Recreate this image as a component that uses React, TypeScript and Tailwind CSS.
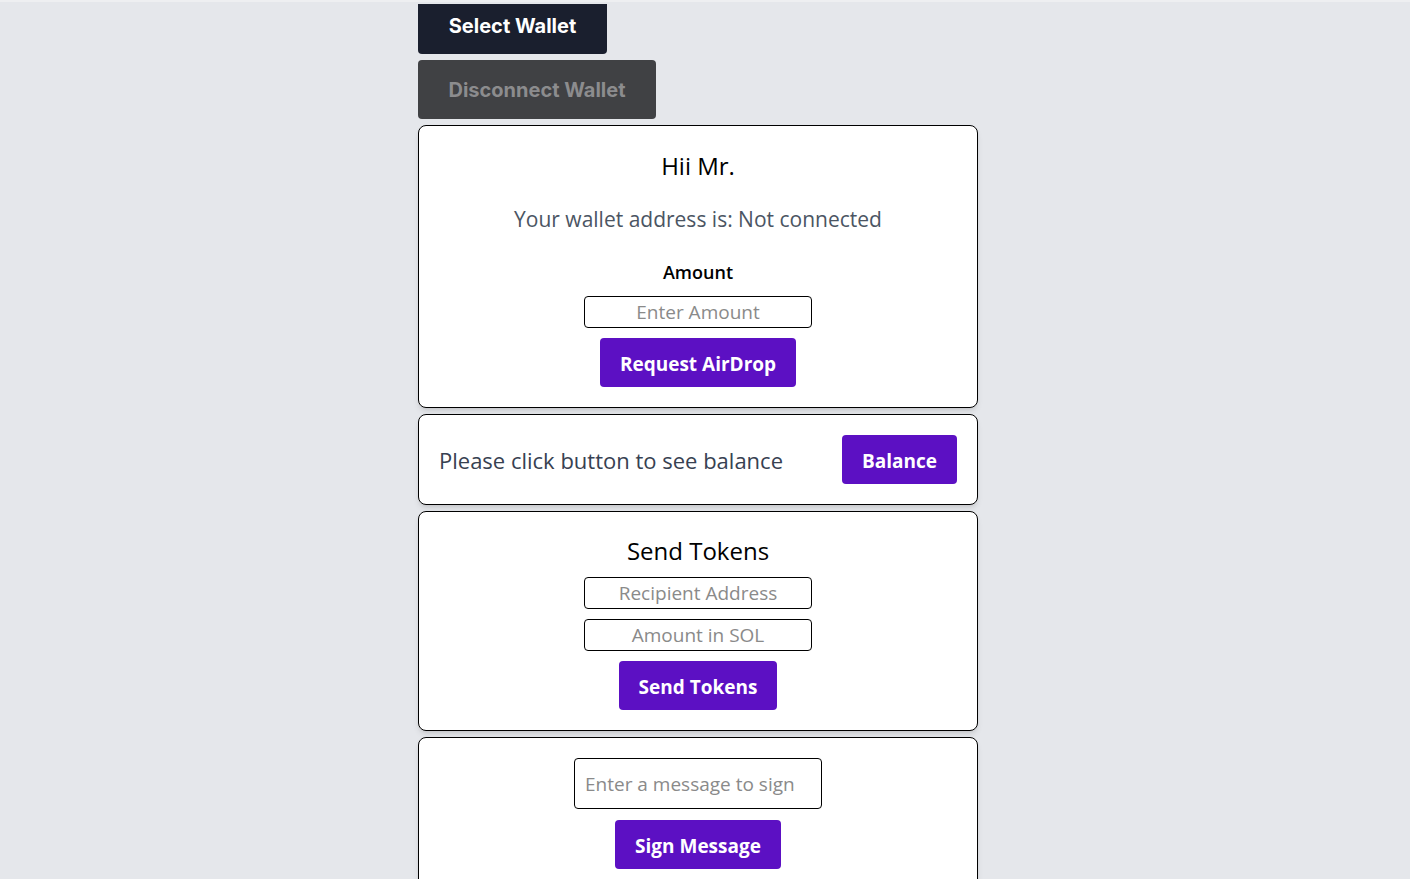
import React from 'react';

const body = { fontFamily: '"Open Sans", "Noto Sans", sans-serif' };
const wallet = { fontFamily: 'Inter, "Liberation Sans", sans-serif' };

const PurpleButton: React.FC<{ label: string; className?: string }> = ({ label, className = '' }) => (
  <button
    className={`h-[49px] px-5 pt-[3px] rounded-[4px] bg-[#5c10c3] text-white text-[19px] font-bold ${className}`}
  >
    {label}
  </button>
);

const Field: React.FC<{ placeholder: string; className?: string }> = ({ placeholder, className = '' }) => (
  <input
    placeholder={placeholder}
    className={`w-[228px] h-[32px] border border-black rounded-[4px] text-center text-[19px] placeholder:text-[#8a8a8a] outline-none ${className}`}
  />
);

const App: React.FC = () => {
  return (
    <div className="h-[879px] overflow-hidden bg-[#e5e7eb]" style={body}>
      <div className="h-[2px] bg-[#eeeff1]" />
      <div className="w-[1396px]">
        <div className="w-[560px] mx-auto flex flex-col">
          {/* Wallet buttons */}
          <button
            style={wallet}
            className="self-start mt-[2px] h-[50px] w-[189px] pb-[6px] rounded-b-[4px] bg-[#1a1f2e] text-white text-[20px] font-bold flex items-center justify-center"
          >
            Select Wallet
          </button>
          <button
            style={wallet}
            className="self-start mt-[6px] h-[59px] w-[238px] rounded-[4px] bg-[#404144] text-[#8c8c8e] text-[20px] font-bold"
          >
            Disconnect Wallet
          </button>

          <div className="mt-[6px] flex flex-col gap-[6px]">
            {/* Airdrop */}
            <div className="bg-white border border-black rounded-lg shadow-md pt-[24px] pb-[20px] flex flex-col items-center">
              <h1 className="text-[24px] leading-[32px] font-medium text-black">Hii Mr.</h1>
              <p className="mt-[22px] text-[21px] leading-[30px] text-[#4b5563]">
                Your wallet address is: Not connected
              </p>
              <label className="mt-[26px] text-[18px] leading-[24px] font-semibold text-black">Amount</label>
              <Field placeholder="Enter Amount" className="mt-[12px]" />
              <PurpleButton label="Request AirDrop" className="mt-[10px]" />
            </div>

            {/* Balance */}
            <div className="bg-white border border-black rounded-lg shadow-md px-5 py-5 flex items-center justify-between">
              <p className="text-[22px] leading-[30px] text-[#374151]">Please click button to see balance</p>
              <PurpleButton label="Balance" />
            </div>

            {/* Send tokens */}
            <div className="bg-white border border-black rounded-lg shadow-md pt-[23px] pb-[20px] flex flex-col items-center">
              <h2 className="text-[24px] leading-[32px] font-medium text-black">Send Tokens</h2>
              <Field placeholder="Recipient Address" className="mt-[10px]" />
              <Field placeholder="Amount in SOL" className="mt-[10px]" />
              <PurpleButton label="Send Tokens" className="mt-[10px]" />
            </div>

            {/* Sign message */}
            <div className="bg-white border border-black rounded-lg shadow-md pt-[20px] pb-[20px] flex flex-col items-center">
              <input
                placeholder="Enter a message to sign"
                className="w-[248px] h-[51px] px-[10px] border border-black rounded-[4px] text-[19px] placeholder:text-[#8a8a8a] outline-none"
              />
              <PurpleButton label="Sign Message" className="mt-[11px]" />
            </div>
          </div>
        </div>
      </div>
    </div>
  );
};

export default App;
